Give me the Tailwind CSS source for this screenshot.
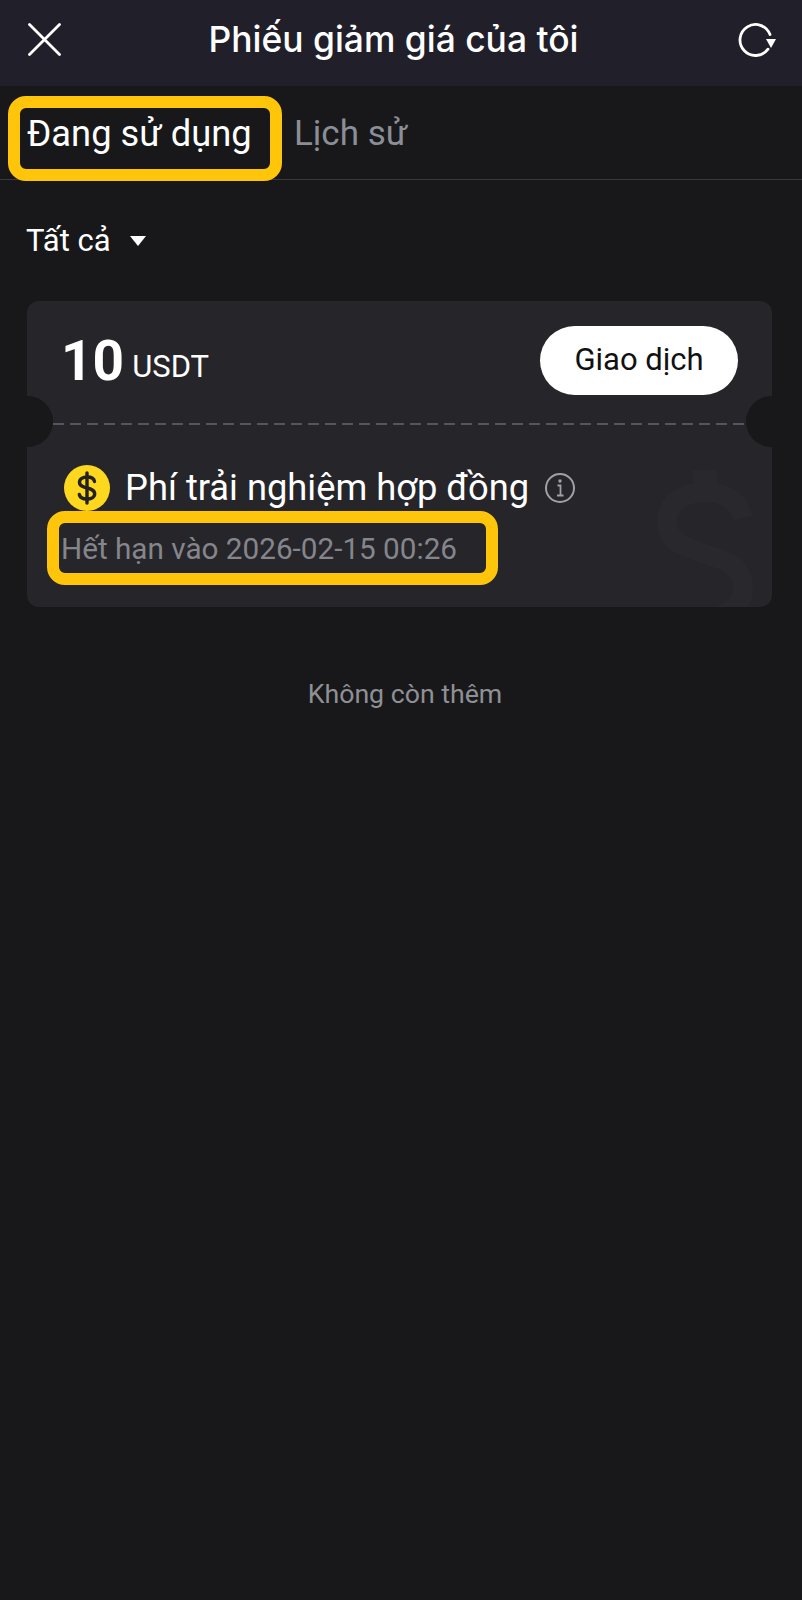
<!DOCTYPE html>
<html lang="vi">
<head>
    <meta charset="UTF-8">
    <title>Phiếu giảm giá của tôi</title>
    <script src="https://cdn.jsdelivr.net/npm/@tailwindcss/browser@4"></script>
</head>
<body class="bg-[#18181a] font-['Roboto',sans-serif] text-white">
<div class="relative w-[802px] h-[1600px] overflow-hidden">
    <!-- header -->
    <header class="h-[86px] bg-[#211f2a] flex items-center justify-between pl-[28px] pr-[26px] pb-[7px]">
        <svg class="w-[33px] h-[33px]" viewBox="0 0 33 33" fill="none" stroke="white" stroke-width="2.800" stroke-linecap="round"><path d="M1.500 1.500L31.500 31.500M31.500 1.500L1.500 31.500"/></svg>
        <h1 class="text-[35.400px] font-medium leading-none font-['Inter',sans-serif] -ml-[12px]">Phiếu giảm giá của tôi</h1>
        <svg class="w-[38px] h-[34px]" viewBox="0 0 38 34" fill="none"><path d="M32 11.500A15.500 15.500 0 1 0 30 26.200" stroke="white" stroke-width="2.800" stroke-linecap="round"/><path d="M28 16H38L33 25Z" fill="white"/></svg>
    </header>

    <!-- tabs -->
    <nav class="h-[94px] border-b border-[#3a3a3d] flex items-start pl-[27px] pt-[24px] leading-[48px]">
        <span class="w-[267px] text-[36.300px]">Đang sử dụng</span>
        <span class="text-[35px] text-[#8b8e96]">Lịch sử</span>
    </nav>

    <!-- filter -->
    <div class="flex items-center gap-[19px] pl-[26px] mt-[41px] text-[31px] leading-[40px]">
        <span>Tất cả</span>
        <span class="w-0 h-0 border-x-[8px] border-x-transparent border-t-[10px] border-t-white"></span>
    </div>

    <!-- coupon -->
    <section class="relative ml-[27px] mt-[40px] w-[745px] h-[306px] rounded-[12px] bg-[#25252a] overflow-hidden">
        <div class="h-[122px] flex items-center justify-between pl-[34px] pr-[34px] pb-[3px]">
            <div class="flex items-baseline gap-[8px] mt-[2px]">
                <span class="text-[55px] font-bold leading-none">10</span>
                <span class="text-[31px] leading-none -translate-y-[3px]">USDT</span>
            </div>
            <button class="w-[198px] h-[69px] rounded-full bg-white text-[#111] text-[31px]">Giao dịch</button>
        </div>
        <div class="mx-[26px] h-[2px] bg-[repeating-linear-gradient(90deg,#55555a_0_11px,transparent_11px_17px)]"></div>
        <div class="relative z-10 pl-[37px] pt-[40px]">
            <div class="flex items-center gap-[15px]">
                <span class="w-[46px] h-[46px] rounded-full bg-[#fdd81f] flex items-center justify-center">
                    <svg class="w-[22px] h-[34px]" viewBox="0 0 22 34" fill="none" stroke="#222" stroke-width="3.400" stroke-linecap="round"><path d="M18.500 10.500C18 7.500 15 6 11 6C7 6 3.500 7.800 3.500 11.300C3.500 15 7 16 11 17C15 18 18.700 19 18.700 22.800C18.700 26.300 15 28 11 28C7 28 4 26.500 3.300 23.500"/><path d="M11 2V32"/></svg>
                </span>
                <span class="text-[36.300px] leading-[46px]">Phí trải nghiệm hợp đồng</span>
                <svg class="w-[30px] h-[30px] ml-[1px]" viewBox="0 0 30 30" fill="none" stroke="#a0a1a6" stroke-width="2"><circle cx="15" cy="15" r="14"/><path d="M12.500 12.500H15.500V22.500M12 22.500H18.500" stroke-width="1.800"/><circle cx="15" cy="8" r="1.700" fill="#a0a1a6" stroke="none"/></svg>
            </div>
            <p class="mt-[18px] -ml-[3px] text-[#85868c] text-[29.700px] leading-[40px]">Hết hạn vào 2026-02-15 00:26</p>
        </div>
        <!-- watermark dollar -->
        <svg class="absolute right-[17px] bottom-0 w-[100px] h-[137px]" viewBox="0 0 100 137" fill="none" stroke="#28282d" stroke-width="20"><path d="M88 48C84 30 68 22 50 22C30 22 12 32 12 52C12 72 32 78 50 84C70 90 88 96 88 118C88 138 68 148 50 148"/><path d="M50 0V30" stroke-width="24"/></svg>
        <!-- ticket notches -->
        <span class="absolute -left-[25px] top-[95px] w-[51px] h-[51px] rounded-full bg-[#18181a]"></span>
        <span class="absolute -right-[25px] top-[95px] w-[51px] h-[51px] rounded-full bg-[#18181a]"></span>
    </section>

    <p class="mt-[69px] pl-[8px] text-center text-[#8f9096] text-[26.700px] leading-[36px]">Không còn thêm</p>

    <!-- highlight annotations -->
    <div class="absolute left-[8px] top-[96px] w-[274px] h-[85px] rounded-[18px] border-[12px] border-[#fec50b]"></div>
    <div class="absolute left-[47px] top-[511px] w-[451px] h-[74px] rounded-[18px] border-[12px] border-[#fec50b]"></div>
</div>
</body>
</html>
